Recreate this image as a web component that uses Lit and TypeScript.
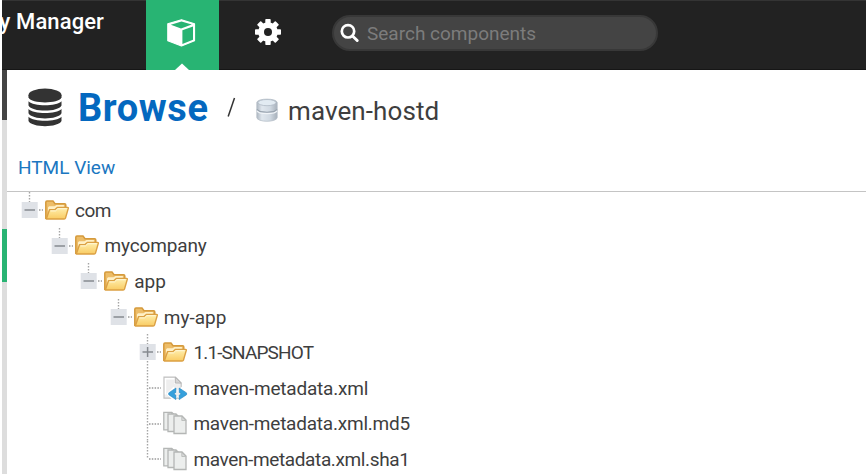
import { LitElement, html, svg, css, nothing } from "lit";
import { customElement, property } from "lit/decorators.js";
import { styleMap } from "lit/directives/style-map.js";

type Kind = "folder" | "xml" | "files";
interface TreeItem { label: string; depth: number; kind: Kind; state?: "open" | "closed"; last?: boolean; spacing: number; }

const items: TreeItem[] = [
  { label: "com", depth: 0, kind: "folder", state: "open", spacing: -0.5 },
  { label: "mycompany", depth: 1, kind: "folder", state: "open", spacing: -0.15 },
  { label: "app", depth: 2, kind: "folder", state: "open", spacing: 0 },
  { label: "my-app", depth: 3, kind: "folder", state: "open", spacing: 0 },
  { label: "1.1-SNAPSHOT", depth: 4, kind: "folder", state: "closed", spacing: -0.85 },
  { label: "maven-metadata.xml", depth: 4, kind: "xml", spacing: -0.2 },
  { label: "maven-metadata.xml.md5", depth: 4, kind: "files", spacing: -0.22 },
  { label: "maven-metadata.xml.sha1", depth: 4, kind: "files", last: true, spacing: -0.37 },
];

const folderIcon = svg`
  <defs><linearGradient id="f" x1="0" y1="0" x2="0" y2="1"><stop offset="0" stop-color="#fff0b0"/><stop offset="1" stop-color="#f9cb62"/></linearGradient></defs>
  <path d="M.8 20V3.2Q.8 2 2 2H8l2 2.7h9.6q1.2 0 1.2 1.2V9" fill="#edbd68" stroke="#d59a3c" stroke-width="1.5"/>
  <path d="M3 17V8.5l1-1.2h5.5l2-1.4h7.4V9" fill="#fff0c5"/>
  <path d="M1.3 20 4.6 10.6H10l2.3-2.2h10.4q.8 0 .6.8l-2.8 9.9q-.3.9-1.3.9z" fill="url(#f)" stroke="#dba043" stroke-width="1.4" stroke-linejoin="round"/>
  <path d="M5.5 11.9h5l2.3-2.2h8.8" fill="none" stroke="#fff7d8"/>`;

const xmlIcon = svg`
  <path d="M1 .2h11.5l5.7 5.7v15.3H1z" fill="#eee" stroke="#c1c1c1" stroke-width="1.2"/>
  <path d="M2.5 17.5V1.7H12v4.7h4.5" fill="none" stroke="#fff" stroke-width="1.4"/>
  <path d="M12.3.2v5.9h5.9z" fill="#d5d5d5" stroke="#b5b5b5"/>
  <path d="M12.6 11.8 7.6 16.8l5 5M16.6 11.8l5 5-5 5" fill="none" stroke="#fff" stroke-width="6"/>
  <path d="M12.9 11v4.4l-2 1.4 2 1.4v4.4L5.7 17.7v-1.8zM16.2 11v4.4l2 1.4-2 1.4v4.4l7.4-4.9v-1.8z" fill="#35a0dc" stroke="#1f83bf" stroke-width=".6"/>`;

const sheet = (x: number, y: number) => svg`
  <path d=${`M${x} ${y}h8l4 4v13.5h-12z`} fill="#eceeed" stroke="#b4b6b5" stroke-width="1.3"/>
  <path d=${`M${x + 7.8} ${y + 0.5}v4h4z`} fill="#d9dbda" stroke="#b4b6b5" stroke-width=".8"/>`;
const filesIcon = svg`${sheet(0.8, 0.3)}${sheet(5, 2)}${sheet(11, 4)}`;

@customElement("tree-row")
class TreeRow extends LitElement {
  @property({ attribute: false }) item!: TreeItem;
  static styles = css`
    :host { display: flex; align-items: center; height: 35.6px; flex: none; color: #3e3e3e; }
    .line { width: 24px; height: 35.6px; flex: none; display: block; }
    .icon { width: 24px; height: 23px; flex: none; margin-top: 1px; overflow: visible; }
    .label { margin: 2px 0 0 6px; font-size: 19px; line-height: 24px; white-space: nowrap; }
  `;
  render() {
    const { label, kind, state, last, spacing } = this.item;
    const bottom = state === "open" ? 10 : last ? 18 : 35.6;
    return html`
      <svg class="line" viewBox="0 0 24 35.6">
        <path d=${`M8.5 0V${bottom}`} stroke="#a5a5a5" stroke-width="1.4" stroke-dasharray="1.5 1.5" fill="none"/>
        <path d=${state ? "M18 18H22" : "M10 18H22"} stroke="#999" stroke-width="1.3" stroke-dasharray="1.5 1.3"/>
        ${state ? svg`<rect x=".7" y="10" width="16" height="16" fill="#dfe2e7"/>
          <path d="M3.5 18H14" stroke="#868a90" stroke-width="1.5"/>` : nothing}
        ${state === "closed" ? svg`<path d="M8.6 13V23" stroke="#868a90" stroke-width="1.5"/>` : nothing}
      </svg>
      <svg class="icon" viewBox="0 0 24 23">${kind === "folder" ? folderIcon : kind === "xml" ? xmlIcon : filesIcon}</svg>
      <span class="label" style=${styleMap({ letterSpacing: `${spacing}px` })}>${label}</span>`;
  }
  updated() { this.style.paddingLeft = `${this.item.depth * 29.6}px`; }
}

@customElement("app-root")
class AppRoot extends LitElement {
  static styles = css`
    :host { display: flex; flex-direction: column; width: 866px; height: 474px; overflow: hidden; background: #fff; box-sizing: border-box; padding-left: 2px; font-family: Roboto, "Liberation Sans", sans-serif; }
    .header { display: flex; height: 70px; flex: none; background: #222; box-sizing: border-box; border-top: 1px solid #343434; border-bottom: 1px solid #161616; }
    .brand { width: 144px; flex: none; color: #fff; font-weight: 500; font-size: 22px; line-height: 26px; padding-top: 8px; box-sizing: border-box; white-space: nowrap; display: flex; justify-content: flex-end; padding-right: 42px; overflow: hidden; letter-spacing: .1px; }
    .tab { width: 73px; height: 70px; margin-top: -1px; flex: none; display: block; }
    .gear { width: 28px; height: 28px; margin: 17px 0 0 35px; flex: none; }
    .search { display: flex; align-items: center; box-sizing: border-box; width: 326px; height: 36px; border: 2px solid #383838; border-radius: 18px; background: #444; margin: 14px 0 0 50px; padding-left: 6px; }
    .glass { width: 20px; height: 20px; }
    .hint { color: #7c7c7c; font-size: 19px; margin-left: 7px; white-space: nowrap; }
    .body { display: flex; flex: 1; min-height: 0; }
    .rail { width: 5px; flex: none; display: flex; flex-direction: column; background: #ddd; }
    .dark { height: 50px; background: #444; }
    .gap { height: 109px; }
    .active { height: 53px; background: #28b473; }
    .page { flex: 1; min-width: 0; display: flex; flex-direction: column; }
    .title { display: flex; height: 80px; align-items: center; padding-left: 21px; box-sizing: border-box; flex: none; }
    .db { width: 34px; height: 39px; margin-top: -5px; }
    .browse { color: #0468bf; font-size: 38px; font-weight: 700; line-height: 44px; margin: -4px 0 0 16px; width: 149px; white-space: nowrap; letter-spacing: .6px; }
    .slash { width: 9px; height: 21px; margin-top: -6px; }
    .repo { width: 22px; height: 24px; margin: 0 0 0 20px; }
    .name { font-size: 26px; color: #3e3e3e; line-height: 32px; margin: 1px 0 0 10px; white-space: nowrap; letter-spacing: .1px; }
    .views { height: 42px; flex: none; box-sizing: border-box; border-bottom: 1px solid #c4c4c4; padding: 6px 0 0 11px; color: #1b77c1; font-size: 19px; line-height: 24px; white-space: nowrap; }
    .tree { display: flex; flex-direction: column; padding-left: 14px; }
  `;
  render() {
    return html`
      <div class="header">
        <div class="brand">y Manager</div>
        <svg class="tab" viewBox="0 0 73 70">
          <path d="M0 0H73V70H0z" fill="#28b473"/>
          <path d="M29 70l7-6.5 7 6.5z" fill="#fff"/>
          <path d="M21.8 23.8 35.5 19.7l13 4.1v17L35.5 46 21.8 40.8z" fill="#fff" stroke="#fff" stroke-width="1.2" stroke-linejoin="round"/>
          <path d="M24.8 24.7 35.5 21.4l10.3 3.2L35 28.6zM36.4 30.2l10.6-3.8v13.4l-10.6 4.3z" fill="#28b473"/>
        </svg>
        <svg class="gear" viewBox="-14 -14 28 28">
          ${[0, 45, 90, 135].map((a) => svg`<rect x="-2.7" y="-13" width="5.4" height="26" rx=".8" transform=${`rotate(${a})`} fill="#fff"/>`)}
          <circle r="9.8" fill="#fff"/><circle r="4" fill="#222"/>
        </svg>
        <div class="search">
          <svg class="glass" viewBox="0 0 20 20" fill="none" stroke="#fff"><circle cx="8" cy="8.3" r="6.2" stroke-width="2.7"/><path d="M12.5 13l4.7 4.5" stroke-width="3" stroke-linecap="round"/></svg>
          <span class="hint">Search components</span>
        </div>
      </div>
      <div class="body">
        <div class="rail"><div class="dark"></div><div class="gap"></div><div class="active"></div></div>
        <div class="page">
          <div class="title">
            <svg class="db" viewBox="0 0 34 39" fill="#333">
              <ellipse cx="17" cy="7" rx="16.5" ry="6.5"/>
              <path d="M.5 7h33v2.5c-3 6.5-30 6.5-33 0z"/>
              ${[13.2, 21, 28.8].map((y) => svg`<path d=${`M.5 ${y}c5 5.4 28 5.4 33 0v4.3c-3 6.8-30 6.8-33 0z`}/>`)}
            </svg>
            <div class="browse">Browse</div>
            <svg class="slash" viewBox="0 0 9 21"><path d="M1.2 19.5 7.5 1" stroke="#333" stroke-width="1.5"/></svg>
            <svg class="repo" viewBox="0 0 22 24">
              <defs><linearGradient id="g"><stop stop-color="#aeb7c1"/><stop offset=".25" stop-color="#e0e7ee"/><stop offset=".65" stop-color="#d0d9e2"/><stop offset="1" stop-color="#a7b0ba"/></linearGradient></defs>
              <path d="M.8 4.5C1 0 21 0 21.2 4.5v15c-.2 5-20.2 5-20.4 0z" fill="url(#g)" stroke="#b8c0c9" stroke-width=".8"/>
              <ellipse cx="11" cy="4.6" rx="9" ry="3.1" fill="#e2ebf2" stroke="#b0bac5" stroke-width=".8"/>
              <path d="M1 11.4c2 3.8 18 3.8 20 0" fill="none" stroke="#98a3af" stroke-width="1.2"/>
              <path d="M1 12.8c2 3.8 18 3.8 20 0" fill="none" stroke="#f0f4f8" stroke-width="1.2"/>
            </svg>
            <div class="name">maven-hostd</div>
          </div>
          <div class="views"><span>HTML View</span></div>
          <div class="tree">${items.map((i) => html`<tree-row .item=${i}></tree-row>`)}</div>
        </div>
      </div>`;
  }
}
